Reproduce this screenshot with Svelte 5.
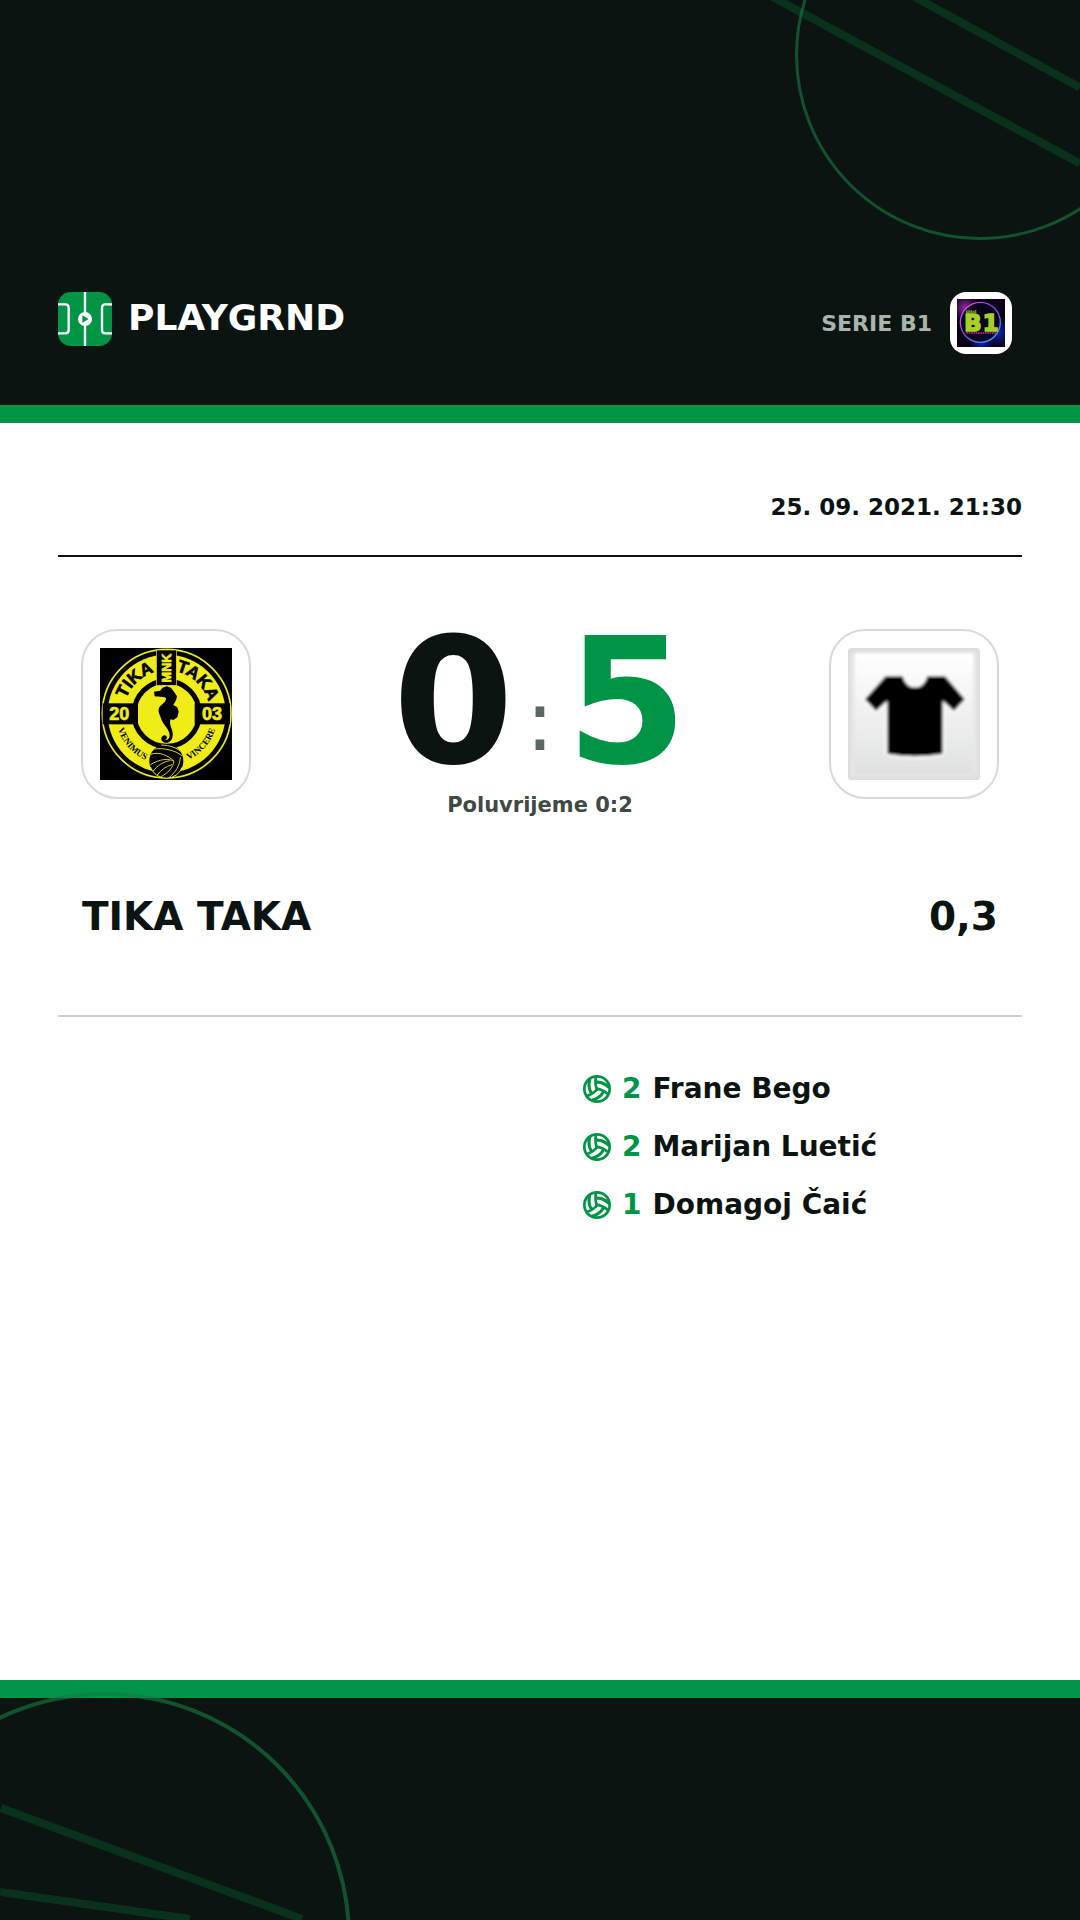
<script>
  const scorers = [
    { goals: 2, name: 'Frane Bego' },
    { goals: 2, name: 'Marijan Luetić' },
    { goals: 1, name: 'Domagoj Čaić' }
  ];
</script>

<div class="page">
  <header>
    <svg class="decor decor-top" viewBox="0 0 320 260" aria-hidden="true">
      <path class="stripe" d="M-2 -11 L320 163.500 M120 -22 L320 87.500" />
      <circle cx="220" cy="55" r="183.500" stroke-width="3" class="ring" />
    </svg>
    <div class="brand">
      <svg class="brand-icon" viewBox="0 0 162 162" aria-hidden="true">
        <rect width="162" height="162" rx="38" fill="#009446" />
        <g fill="none" stroke="#fff" stroke-width="7">
          <path d="M81 0V162" />
          <path d="M0 37H22Q32 37 32 47V114Q32 124 22 124H0M162 37H142Q132 37 132 47V114Q132 124 142 124H162" />
        </g>
        <circle cx="81" cy="81" r="21" fill="#fff" />
        <path d="M73 70L92 81L73 92Z" fill="#009446" />
      </svg>
      <span class="brand-name">PLAYGRND</span>
    </div>
    <div class="league">
      <span>SERIE B1</span>
      <div class="league-logo">
        <svg viewBox="0 0 144 144" aria-label="Serie B1">
          <defs>
            <linearGradient id="ring" x1="0" y1="0" x2="1" y2="1">
              <stop offset="0" stop-color="#f35be8" />
              <stop offset=".45" stop-color="#8a45d0" />
              <stop offset="1" stop-color="#38b0f4" />
            </linearGradient>
            <radialGradient id="pinkGlow">
              <stop offset="0" stop-color="#8d2b9c" />
              <stop offset="1" stop-color="#8d2b9c" stop-opacity="0" />
            </radialGradient>
            <radialGradient id="blueGlow">
              <stop offset="0" stop-color="#0a22b0" />
              <stop offset="1" stop-color="#0a22b0" stop-opacity="0" />
            </radialGradient>
          </defs>
          <rect width="144" height="144" fill="#0b0119" />
          <circle cx="24" cy="26" r="38" fill="url(#pinkGlow)" />
          <circle cx="122" cy="98" r="46" fill="url(#blueGlow)" />
          <circle cx="74" cy="132" r="38" fill="url(#blueGlow)" />
          <circle cx="70" cy="70" r="60" fill="#07051b" fill-opacity=".8" stroke="url(#ring)" stroke-width="4" />
          <g font-family="DejaVu Sans, sans-serif" font-weight="700" fill="#a7cf25">
            <text x="26" y="42" font-size="10">SERIE</text>
            <g stroke="#a7cf25" stroke-width="5">
              <text x="22" y="96" font-size="68">B</text>
              <text x="77" y="96" font-size="68">1</text>
            </g>
          </g>
          <path d="M28 102H118" stroke="#c62a92" stroke-width="4" stroke-dasharray="5 2" />
        </svg>
      </div>
    </div>
  </header>

  <main>
    <time class="date" datetime="2021-09-25T21:30">25. 09. 2021. 21:30</time>

    <section class="match">
      <div class="scoreboard">
        <div class="crest">
          <svg viewBox="0 0 396 396" aria-label="MNK Tika Taka">
            <defs>
              <path id="nameArc" d="M70 197A130 130 0 0 1 330 197" />
              <path id="mottoArc" d="M47 197A153 153 0 0 0 353 197" />
            </defs>
            <rect width="396" height="396" />
            <circle cx="200" cy="197" r="193" fill="none" stroke="#f0ec18" stroke-width="5" />
            <circle cx="200" cy="197" r="177" fill="#f0ec18" />
            <circle cx="200" cy="197" r="98" fill="none" stroke="#000" stroke-width="15" />
            <rect x="169" y="6" width="60" height="106" stroke="#f0ec18" stroke-width="2" />
            <rect x="8" y="166" width="106" height="63" />
            <rect x="284" y="166" width="106" height="63" />
            <g font-family="Liberation Sans, sans-serif" font-weight="700">
              <g font-size="52" text-anchor="middle" stroke="#000" stroke-width="2">
                <text><textPath href="#nameArc" startOffset="26%">TIKA</textPath></text>
                <text><textPath href="#nameArc" startOffset="74%">TAKA</textPath></text>
              </g>
              <g fill="#f0ec18" stroke="#f0ec18" stroke-width="2" text-anchor="middle">
                <text x="58" y="216" font-size="54">20</text>
                <text x="336" y="216" font-size="54">03</text>
                <text transform="translate(212 60) rotate(-90)" font-size="38">MNK</text>
              </g>
            </g>
            <g font-family="Liberation Serif, serif" font-weight="700" font-size="27" text-anchor="middle">
              <text><textPath href="#mottoArc" startOffset="23%">VENIMUS</textPath></text>
              <text><textPath href="#mottoArc" startOffset="77%">VINCERE</textPath></text>
            </g>
            <path d="M162 131L180 128L188 119L200 115L213 119L222 131L231 145L228 157L220 171L232 178L236 191L232 208L220 216L212 214C206 228 216 241 218 254C220 276 208 286 194 284C182 281 180 266 192 262C202 261 204 272 196 276C202 278 212 271 208 256C205 241 190 231 184 214C180 200 172 191 178 178C186 168 200 161 198 151C192 144 180 149 164 145Z" />
            <circle cx="199" cy="339" r="51" />
            <path d="M153 319C176 310 205 322 222 340M164 303C190 299 225 306 247 324M184 291C210 292 234 300 246 314M222 340C219 358 205 375 181 387M241 327C240 352 227 373 207 389M222 340C205 330 180 333 151 350M159 370C172 352 190 342 209 338M172 381C182 366 198 355 216 350" fill="none" stroke="#d8d41c" stroke-width="3" />
            <path d="M151 357A51 51 0 0 0 247 357" fill="none" stroke="#f0ec18" stroke-width="3" />
          </svg>
        </div>

        <div class="result">
          <div class="score">
            <span>0</span><span class="colon">:</span><span class="winner">5</span>
          </div>
          <p class="halftime">Poluvrijeme 0:2</p>
        </div>

        <div class="crest">
          <svg viewBox="0 0 396 396" aria-label="0,3">
            <defs>
              <linearGradient id="tile" x1="0" y1="0" x2="0" y2="1">
                <stop offset="0" stop-color="#fff" />
                <stop offset="1" stop-color="#dfe1e0" />
              </linearGradient>
              <filter id="soft"><feGaussianBlur stdDeviation="4" /></filter>
            </defs>
            <rect width="396" height="396" rx="10" fill="#dcdddc" />
            <g filter="url(#soft)">
              <rect x="8" y="12" width="380" height="374" rx="8" fill="#e6e7e6" />
              <rect x="20" y="16" width="356" height="362" rx="8" fill="url(#tile)" />
              <path d="M114 88H162Q172 120 201 120Q230 120 240 88H290L348 154L318 186L282 156V316Q201 330 120 316V156L84 186L53 154Z" stroke="#fff" stroke-width="18" stroke-linejoin="round" />
              <path d="M114 86H162Q172 120 201 120Q230 120 240 86H290L348 154L318 186L282 154V316Q201 330 120 316V154L84 186L53 154Z" stroke="#000" stroke-width="4" />
            </g>
          </svg>
        </div>
      </div>

      <div class="teams">
        <h2>TIKA TAKA</h2>
        <h2>0,3</h2>
      </div>
    </section>

    <ul class="scorers">
      {#each scorers as scorer}
        <li>
          <svg class="ball" viewBox="0 0 84 84" aria-hidden="true">
            <g fill="none" stroke="#009446" stroke-width="8">
              <circle cx="42" cy="42" r="38" />
              {#each [0, 120, 240] as turn}
                <g transform="rotate({turn} 42 42)">
                  <path d="M43 46C37 34 36 20 39 4M38 22C54 20 68 26 79 38M21 11C17 26 17 40 24 54" />
                </g>
              {/each}
            </g>
          </svg>
          <span class="goals">{scorer.goals}</span>
          <span>{scorer.name}</span>
        </li>
      {/each}
    </ul>
  </main>

  <footer>
    <svg class="decor decor-bottom" viewBox="0 0 360 240" aria-hidden="true">
      <path class="stripe" d="M1 128L302 239M0 212L190 239" />
      <circle cx="105" cy="258" r="244" stroke-width="4" class="ring" />
    </svg>
  </footer>
</div>

<style>
  :global(body) {
    margin: 0;
  }

  .page {
    display: flex;
    flex-direction: column;
    min-height: 100vh;
    background: #fff;
    color: #0c1411;
    font-family: 'DejaVu Sans', sans-serif;
    font-weight: 700;
  }

  header {
    position: relative;
    display: flex;
    justify-content: space-between;
    align-items: flex-start;
    padding: 292px 68px 51px 58px;
    background: #0c1411;
    border-bottom: 18px solid #009446;
  }

  .decor {
    position: absolute;
    fill: none;
    overflow: hidden;
  }

  .decor-top {
    top: 0;
    right: 0;
    width: 320px;
    height: 260px;
  }

  .decor-bottom {
    left: 0;
    bottom: 0;
    width: 360px;
    height: 240px;
  }

  .stripe {
    stroke: #009446;
    stroke-opacity: 0.24;
    stroke-width: 8px;
  }

  .ring {
    stroke: #137a40;
    stroke-opacity: 0.62;
  }

  .brand {
    display: flex;
    gap: 16px;
  }

  .brand-icon {
    width: 54px;
    height: 54px;
  }

  .brand-name {
    color: #fff;
    font-size: 36px;
    line-height: 52px;
  }

  .league {
    display: flex;
    align-items: center;
    gap: 18px;
    color: #aab4af;
    font-size: 22px;
  }

  .league-logo {
    padding: 7px;
    border-radius: 16px;
    background: #fff;
  }

  .league-logo svg {
    display: block;
    width: 48px;
    height: 48px;
  }

  main {
    display: flex;
    flex: 1;
    flex-direction: column;
    padding: 68px 58px;
  }

  .date {
    padding-bottom: 32px;
    border-bottom: 2px solid #0c1411;
    font-size: 23px;
    line-height: 32px;
    text-align: right;
  }

  .match {
    padding: 72px 23px 68px;
    border-bottom: 2px solid #cbd2cf;
  }

  .scoreboard {
    display: flex;
    justify-content: space-between;
    align-items: flex-start;
  }

  .crest {
    padding: 17px;
    border: 2px solid #d5dbd9;
    border-radius: 36px;
  }

  .crest svg {
    display: block;
    width: 132px;
    height: 132px;
  }

  .result {
    text-align: center;
  }

  .score {
    display: flex;
    justify-content: center;
    align-items: center;
    height: 148px;
    font-size: 174px;
    line-height: 148px;
  }

  .colon {
    padding: 36px 12px 0;
    color: #5b665f;
    font-size: 84px;
    font-weight: 400;
    line-height: 108px;
  }

  .winner {
    color: #009446;
  }

  .halftime {
    margin: 12px 0 0;
    color: #3f4a45;
    font-size: 21px;
    line-height: 32px;
  }

  .teams {
    display: flex;
    justify-content: space-between;
    padding: 66px 1px 0;
  }

  h2 {
    margin: 0;
    font-size: 39px;
    line-height: 60px;
  }

  .scorers {
    display: grid;
    gap: 22px;
    width: 50%;
    box-sizing: border-box;
    margin: 54px 0 0 auto;
    padding: 0 0 0 43px;
    list-style: none;
    font-size: 28px;
    line-height: 36px;
  }

  .scorers li {
    display: flex;
    align-items: center;
    gap: 11px;
  }

  .ball {
    width: 28px;
    height: 28px;
  }

  .goals {
    color: #009446;
  }

  footer {
    position: relative;
    height: 222px;
    border-top: 18px solid #009446;
    background: #0c1411;
  }
</style>
